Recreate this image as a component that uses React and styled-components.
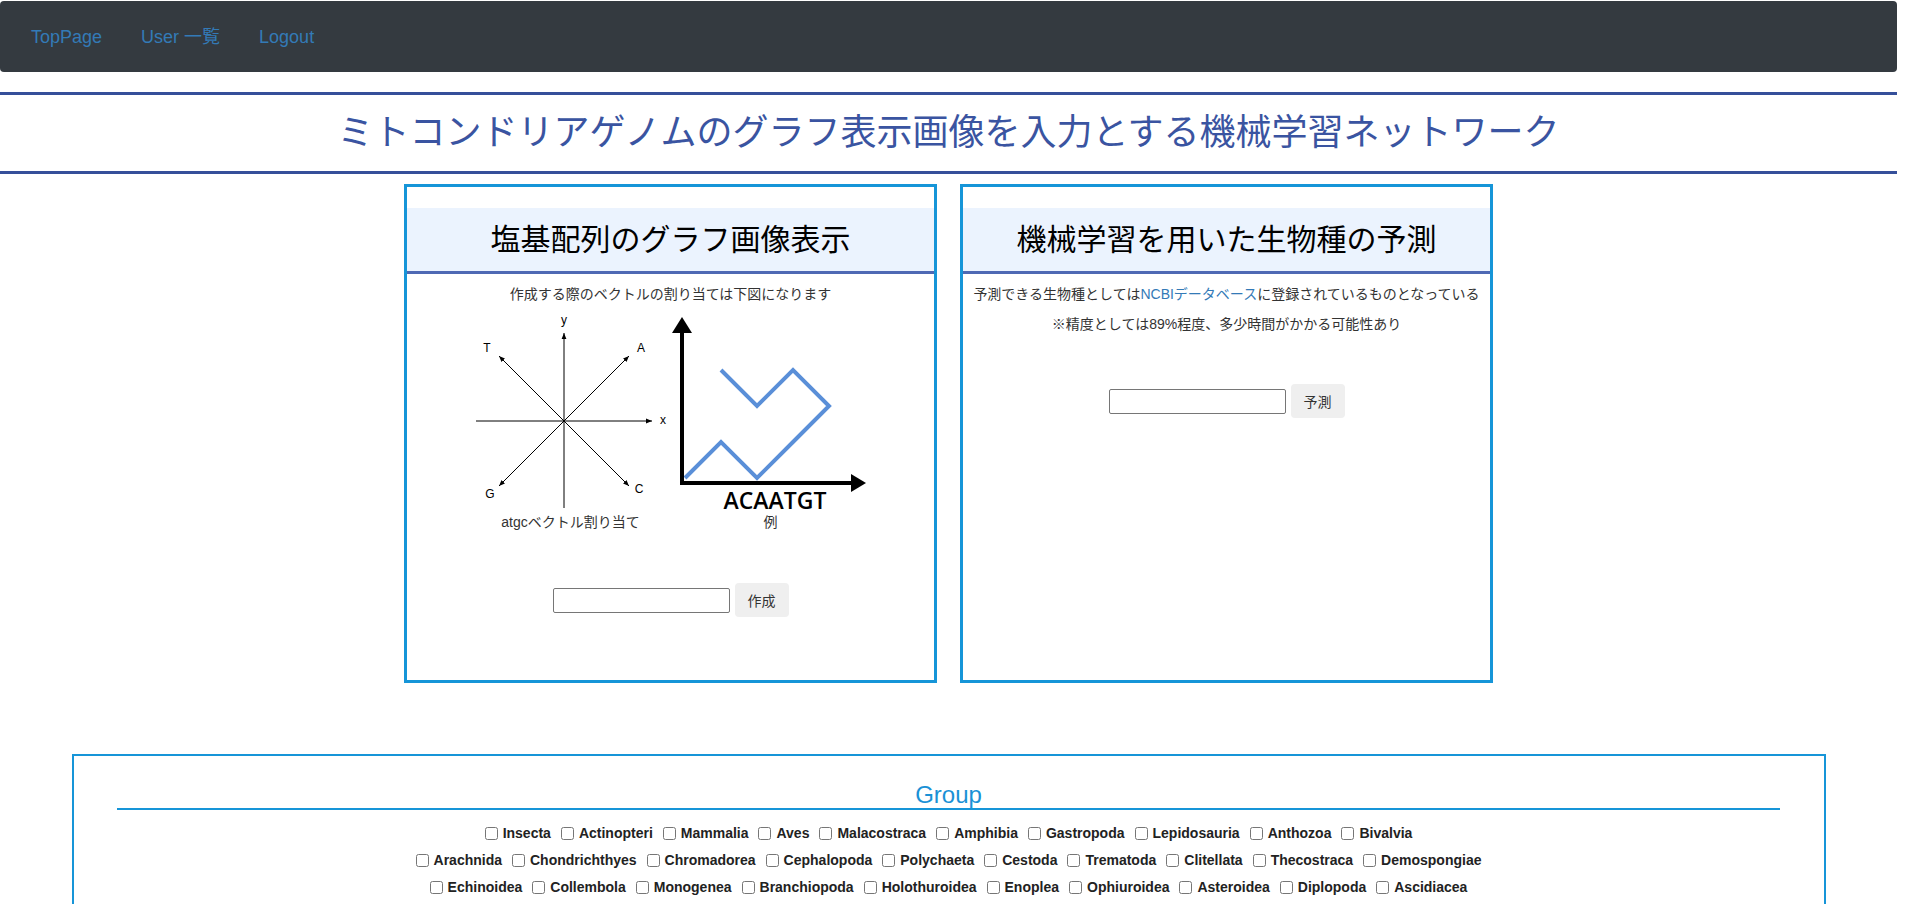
import React from "react";
import styled, { createGlobalStyle } from "styled-components";

const GlobalStyle = createGlobalStyle`
  html {
    overflow-y: scroll;
  }
  html::-webkit-scrollbar {
    width: 17px;
    background: #f1f1f1;
  }
  html::-webkit-scrollbar-thumb {
    background: #c1c1c1;
    border: 2px solid #f1f1f1;
  }
  body {
    margin: 0;
    font-family: "Liberation Sans", "Noto Sans CJK JP", sans-serif;
    font-size: 14px;
    line-height: 20px;
    color: #333;
    background: #fff;
  }
  #root {
    width: 1897px;
  }
`;

const Navbar = styled.nav`
  margin-top: 1px;
  height: 71px;
  background-color: #343a40;
  border-radius: 4px;
  display: flex;
  align-items: center;
  gap: 39px;
  padding: 0 31px;
`;

const NavLink = styled.a`
  color: #337ab7;
  font-size: 18px;
  text-decoration: none;
`;

const TitleBand = styled.header`
  margin-top: 20px;
  height: 76px;
  border-top: 3px solid #354f9a;
  border-bottom: 3px solid #354f9a;
  display: flex;
  align-items: center;
  justify-content: center;
`;

const Title = styled.h1`
  margin: 0;
  font-size: 36px;
  font-weight: 400;
  color: #3a54a1;
`;

const CardRow = styled.div`
  display: flex;
  justify-content: center;
  gap: 23px;
  margin-top: 10px;
`;

const Card = styled.section`
  width: 533px;
  height: 499px;
  box-sizing: border-box;
  border: 3px solid #1695d8;
  padding-top: 21px;
  text-align: center;
`;

const CardHeader = styled.h2`
  margin: 0;
  height: 63px;
  background-color: #ebf3fe;
  border-bottom: 3px solid #4e69b4;
  font-size: 30px;
  font-weight: 400;
  color: #000;
  display: flex;
  align-items: center;
  justify-content: center;
`;

const Para = styled.p`
  margin: 10px 0 0;
  white-space: nowrap;
`;

const ExtLink = styled.a`
  color: #337ab7;
  text-decoration: none;
`;

const Figures = styled.div`
  display: flex;
  justify-content: center;
  margin-top: 8px;
`;

const Figure = styled.figure`
  margin: 0;
  width: 200px;
  text-align: center;

  svg {
    display: block;
    overflow: visible;
  }
`;

const FormRow = styled.form`
  display: flex;
  justify-content: center;
  align-items: center;
  gap: 5px;
  margin-top: ${(props) => props.$top}px;
`;

const TextInput = styled.input`
  width: 177px;
  height: 25px;
  box-sizing: border-box;
  border: 1px solid #767676;
  border-radius: 2px;
  padding: 1px 2px;
  font-size: 14px;
`;

const Button = styled.button`
  height: 34px;
  padding: 0 12px;
  border: 1px solid transparent;
  border-radius: 4px;
  background-color: #efefef;
  color: #333;
  font-family: inherit;
  font-size: 14px;
`;

const GroupBox = styled.section`
  width: 1754px;
  box-sizing: border-box;
  margin: 71px auto 0;
  border: 2px solid #1695d8;
  padding: 27px 0 60px;
`;

const GroupTitle = styled.h3`
  margin: 0;
  font-size: 24px;
  line-height: 24px;
  font-weight: 400;
  color: #1a91d6;
  text-align: center;
`;

const Divider = styled.hr`
  width: 95%;
  margin: 1px auto 13px;
  border: 0;
  border-top: 2px solid #1695d8;
`;

const CheckRow = styled.div`
  display: flex;
  justify-content: center;
  gap: 10px;
  margin-bottom: 7px;
`;

const CheckLabel = styled.label`
  display: inline-flex;
  align-items: center;
  font-weight: 700;
  font-size: 14px;
  color: #222;
`;

const Checkbox = styled.input`
  width: 13px;
  height: 13px;
  margin: 0 5px 0 0;
`;

const groups = [
  ["Insecta", "Actinopteri", "Mammalia", "Aves", "Malacostraca", "Amphibia", "Gastropoda", "Lepidosauria", "Anthozoa", "Bivalvia"],
  ["Arachnida", "Chondrichthyes", "Chromadorea", "Cephalopoda", "Polychaeta", "Cestoda", "Trematoda", "Clitellata", "Thecostraca", "Demospongiae"],
  ["Echinoidea", "Collembola", "Monogenea", "Branchiopoda", "Holothuroidea", "Enoplea", "Ophiuroidea", "Asteroidea", "Diplopoda", "Ascidiacea"],
];

function VectorFigure() {
  return (
    <svg width="200" height="200" viewBox="0 0 200 200">
      <defs>
        <marker id="ah" viewBox="0 0 10 10" refX="10" refY="5" markerWidth="6" markerHeight="6" orient="auto">
          <path d="M0,1 L10,5 L0,9 z" fill="#000" />
        </marker>
      </defs>
      <g stroke="#000" strokeWidth="1" markerEnd="url(#ah)">
        <line x1="5" y1="109" x2="181" y2="109" />
        <line x1="93" y1="196" x2="93" y2="21" />
        <line x1="93" y1="109" x2="28" y2="44" />
        <line x1="93" y1="109" x2="158" y2="44" />
        <line x1="93" y1="109" x2="28" y2="174" />
        <line x1="93" y1="109" x2="158" y2="174" />
      </g>
      <g fontFamily="Liberation Sans, sans-serif" fontSize="12" textAnchor="middle" fill="#000">
        <text x="192" y="112">x</text>
        <text x="93" y="12">y</text>
        <text x="16" y="40">T</text>
        <text x="170" y="40">A</text>
        <text x="19" y="186">G</text>
        <text x="168" y="181">C</text>
      </g>
    </svg>
  );
}

function PathFigure() {
  return (
    <svg width="200" height="200" viewBox="0 0 200 200">
      <polyline
        points="14,166 50,130 86,166 122,130 158,94 122,58 86,94 50,58"
        fill="none"
        stroke="#5a8fd8"
        strokeWidth="4"
      />
      <line x1="11" y1="173" x2="11" y2="20" stroke="#000" strokeWidth="4" />
      <polygon points="1,21 21,21 11,5" fill="#000" />
      <line x1="9" y1="171" x2="181" y2="171" stroke="#000" strokeWidth="4" />
      <polygon points="180,162 180,180 195,171" fill="#000" />
      <text x="104" y="197" textAnchor="middle" fontFamily="Open Sans, sans-serif" fontWeight="600" fontSize="23" fill="#000">
        ACAATGT
      </text>
    </svg>
  );
}

export default function App() {
  return (
    <>
      <GlobalStyle />
      <Navbar>
        <NavLink href="#">TopPage</NavLink>
        <NavLink href="#">User 一覧</NavLink>
        <NavLink href="#">Logout</NavLink>
      </Navbar>
      <TitleBand>
        <Title>ミトコンドリアゲノムのグラフ表示画像を入力とする機械学習ネットワーク</Title>
      </TitleBand>
      <CardRow>
        <Card>
          <CardHeader>塩基配列のグラフ画像表示</CardHeader>
          <Para>作成する際のベクトルの割り当ては下図になります</Para>
          <Figures>
            <Figure>
              <VectorFigure />
              <figcaption>atgcベクトル割り当て</figcaption>
            </Figure>
            <Figure>
              <PathFigure />
              <figcaption>例</figcaption>
            </Figure>
          </Figures>
          <FormRow $top={51} onSubmit={(e) => e.preventDefault()}>
            <TextInput type="text" />
            <Button type="submit">作成</Button>
          </FormRow>
        </Card>
        <Card>
          <CardHeader>機械学習を用いた生物種の予測</CardHeader>
          <Para>
            予測できる生物種としては<ExtLink href="#">NCBIデータベース</ExtLink>に登録されているものとなっている
          </Para>
          <Para>※精度としては89%程度、多少時間がかかる可能性あり</Para>
          <FormRow $top={50} onSubmit={(e) => e.preventDefault()}>
            <TextInput type="text" />
            <Button type="submit">予測</Button>
          </FormRow>
        </Card>
      </CardRow>
      <GroupBox>
        <GroupTitle>Group</GroupTitle>
        <Divider />
        {groups.map((row, i) => (
          <CheckRow key={i}>
            {row.map((name) => (
              <CheckLabel key={name}>
                <Checkbox type="checkbox" />
                {name}
              </CheckLabel>
            ))}
          </CheckRow>
        ))}
      </GroupBox>
    </>
  );
}
